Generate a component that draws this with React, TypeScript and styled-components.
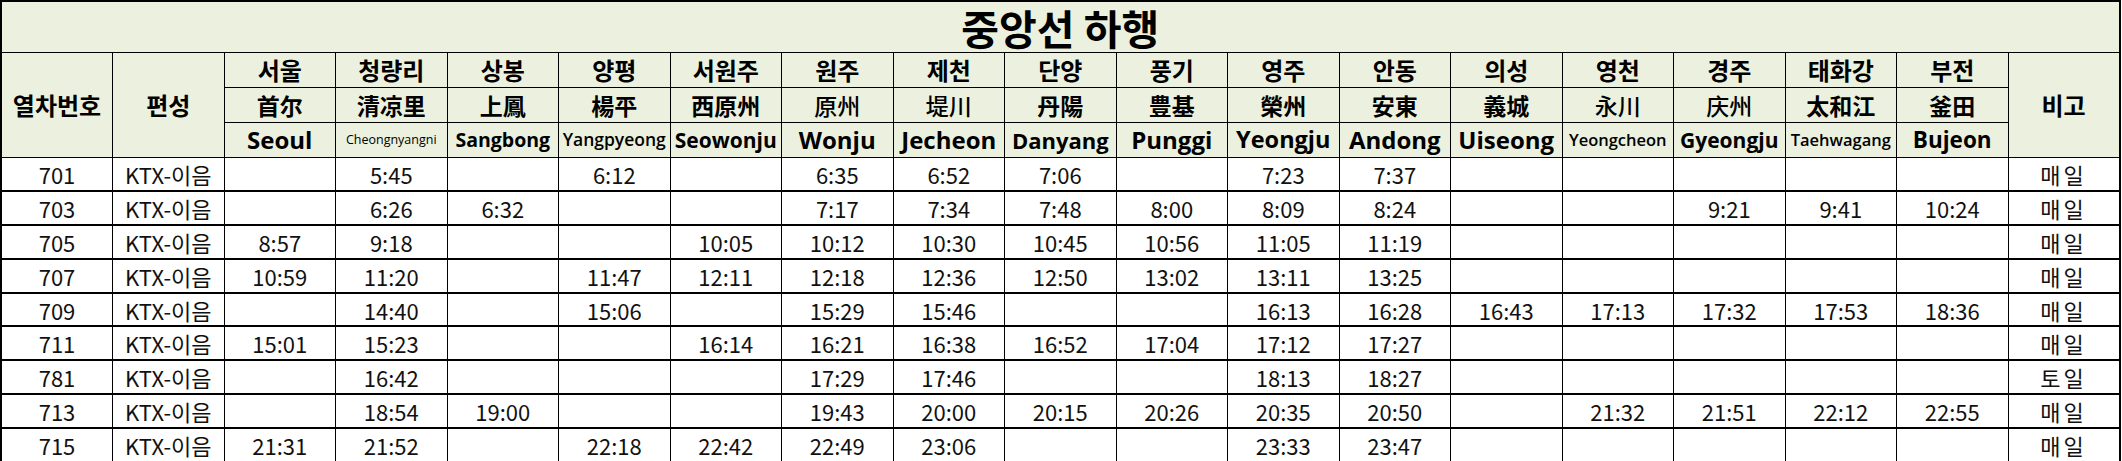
import React from 'react'
import styled, { createGlobalStyle } from 'styled-components'

const GlobalStyle = createGlobalStyle`
  html, body {
    margin: 0;
    padding: 0;
    background: #ffffff;
  }
`

const headerBg = '#ebf1de'

interface Station {
  ko: string
  hanja: string
  en: string
  enSize: number
  enWeight: number
  hanjaWeight: number
}

const stations: Station[] = [
  { ko: '서울', hanja: '首尔', en: 'Seoul', enSize: 24, enWeight: 700, hanjaWeight: 700 },
  { ko: '청량리', hanja: '清凉里', en: 'Cheongnyangni', enSize: 12.5, enWeight: 400, hanjaWeight: 700 },
  { ko: '상봉', hanja: '上鳳', en: 'Sangbong', enSize: 19.5, enWeight: 700, hanjaWeight: 700 },
  { ko: '양평', hanja: '楊平', en: 'Yangpyeong', enSize: 17.5, enWeight: 600, hanjaWeight: 700 },
  { ko: '서원주', hanja: '西原州', en: 'Seowonju', enSize: 21, enWeight: 700, hanjaWeight: 700 },
  { ko: '원주', hanja: '原州', en: 'Wonju', enSize: 24, enWeight: 700, hanjaWeight: 500 },
  { ko: '제천', hanja: '堤川', en: 'Jecheon', enSize: 24, enWeight: 700, hanjaWeight: 500 },
  { ko: '단양', hanja: '丹陽', en: 'Danyang', enSize: 22, enWeight: 700, hanjaWeight: 700 },
  { ko: '풍기', hanja: '豊基', en: 'Punggi', enSize: 24, enWeight: 700, hanjaWeight: 700 },
  { ko: '영주', hanja: '榮州', en: 'Yeongju', enSize: 23.5, enWeight: 700, hanjaWeight: 700 },
  { ko: '안동', hanja: '安東', en: 'Andong', enSize: 24, enWeight: 700, hanjaWeight: 700 },
  { ko: '의성', hanja: '義城', en: 'Uiseong', enSize: 24, enWeight: 700, hanjaWeight: 700 },
  { ko: '영천', hanja: '永川', en: 'Yeongcheon', enSize: 16.5, enWeight: 600, hanjaWeight: 500 },
  { ko: '경주', hanja: '庆州', en: 'Gyeongju', enSize: 21, enWeight: 700, hanjaWeight: 500 },
  { ko: '태화강', hanja: '太和江', en: 'Taehwagang', enSize: 16.5, enWeight: 600, hanjaWeight: 700 },
  { ko: '부전', hanja: '釜田', en: 'Bujeon', enSize: 22.5, enWeight: 700, hanjaWeight: 700 },
]

interface Train {
  no: string
  times: string[]
  note: string
}

const trains: Train[] = [
  { no: '701', times: ['', '5:45', '', '6:12', '', '6:35', '6:52', '7:06', '', '7:23', '7:37', '', '', '', '', ''], note: '매일' },
  { no: '703', times: ['', '6:26', '6:32', '', '', '7:17', '7:34', '7:48', '8:00', '8:09', '8:24', '', '', '9:21', '9:41', '10:24'], note: '매일' },
  { no: '705', times: ['8:57', '9:18', '', '', '10:05', '10:12', '10:30', '10:45', '10:56', '11:05', '11:19', '', '', '', '', ''], note: '매일' },
  { no: '707', times: ['10:59', '11:20', '', '11:47', '12:11', '12:18', '12:36', '12:50', '13:02', '13:11', '13:25', '', '', '', '', ''], note: '매일' },
  { no: '709', times: ['', '14:40', '', '15:06', '', '15:29', '15:46', '', '', '16:13', '16:28', '16:43', '17:13', '17:32', '17:53', '18:36'], note: '매일' },
  { no: '711', times: ['15:01', '15:23', '', '', '16:14', '16:21', '16:38', '16:52', '17:04', '17:12', '17:27', '', '', '', '', ''], note: '매일' },
  { no: '781', times: ['', '16:42', '', '', '', '17:29', '17:46', '', '', '18:13', '18:27', '', '', '', '', ''], note: '토일' },
  { no: '713', times: ['', '18:54', '19:00', '', '', '19:43', '20:00', '20:15', '20:26', '20:35', '20:50', '', '21:32', '21:51', '22:12', '22:55'], note: '매일' },
  { no: '715', times: ['21:31', '21:52', '', '22:18', '22:42', '22:49', '23:06', '', '', '23:33', '23:47', '', '', '', '', ''], note: '매일' },
]

const Timetable = styled.table`
  width: 2118px;
  table-layout: fixed;
  border-collapse: collapse;
  border: 2px solid #000;
  font-family: "Noto Sans CJK KR", "Open Sans", sans-serif;
  color: #000;
`

const Col = styled.col`
  width: 111.5px;
`

const TitleCell = styled.th`
  height: 50px;
  padding: 0;
  background: ${headerBg};
  border: 1px solid #000;
  font-size: 41px;
  font-weight: 700;
  line-height: 1;
  text-align: center;
  vertical-align: middle;
`

const HeadCell = styled.th<{ $size?: number; $weight?: number; $latin?: boolean }>`
  height: 34px;
  padding: 0;
  background: ${headerBg};
  border: 1px solid #000;
  font-family: ${p => (p.$latin ? '"Open Sans", "Noto Sans CJK KR", sans-serif' : '"Noto Sans CJK KR", sans-serif')};
  font-size: ${p => p.$size ?? 24}px;
  font-weight: ${p => p.$weight ?? 700};
  line-height: 1;
  text-align: center;
  vertical-align: middle;
  white-space: nowrap;
  overflow: hidden;
`

const DataRow = styled.tr`
  height: 33.8px;
`

const DataCell = styled.td<{ $spaced?: boolean }>`
  padding: 0;
  border-left: 1px solid #000;
  border-right: 1px solid #000;
  border-bottom: 2px solid #000;
  font-size: 22px;
  font-weight: 400;
  line-height: 1;
  text-align: center;
  vertical-align: middle;
  white-space: nowrap;
  letter-spacing: ${p => (p.$spaced ? '3px' : '0')};
  color: #111;
`

export default function App() {
  return (
    <>
      <GlobalStyle />
      <Timetable>
        <colgroup>
          {Array.from({ length: 19 }, (_, i) => (
            <Col key={i} />
          ))}
        </colgroup>
        <thead>
          <tr>
            <TitleCell colSpan={19}>중앙선 하행</TitleCell>
          </tr>
          <tr>
            <HeadCell rowSpan={3}>열차번호</HeadCell>
            <HeadCell rowSpan={3}>편성</HeadCell>
            {stations.map(s => (
              <HeadCell key={s.ko}>{s.ko}</HeadCell>
            ))}
            <HeadCell rowSpan={3}>비고</HeadCell>
          </tr>
          <tr>
            {stations.map(s => (
              <HeadCell key={s.hanja} $weight={s.hanjaWeight} $size={23}>
                {s.hanja}
              </HeadCell>
            ))}
          </tr>
          <tr>
            {stations.map(s => (
              <HeadCell key={s.en} $latin $size={s.enSize} $weight={s.enWeight}>
                {s.en}
              </HeadCell>
            ))}
          </tr>
        </thead>
        <tbody>
          {trains.map(t => (
            <DataRow key={t.no}>
              <DataCell>{t.no}</DataCell>
              <DataCell>KTX-이음</DataCell>
              {t.times.map((time, i) => (
                <DataCell key={i}>{time}</DataCell>
              ))}
              <DataCell $spaced>{t.note}</DataCell>
            </DataRow>
          ))}
        </tbody>
      </Timetable>
    </>
  )
}
